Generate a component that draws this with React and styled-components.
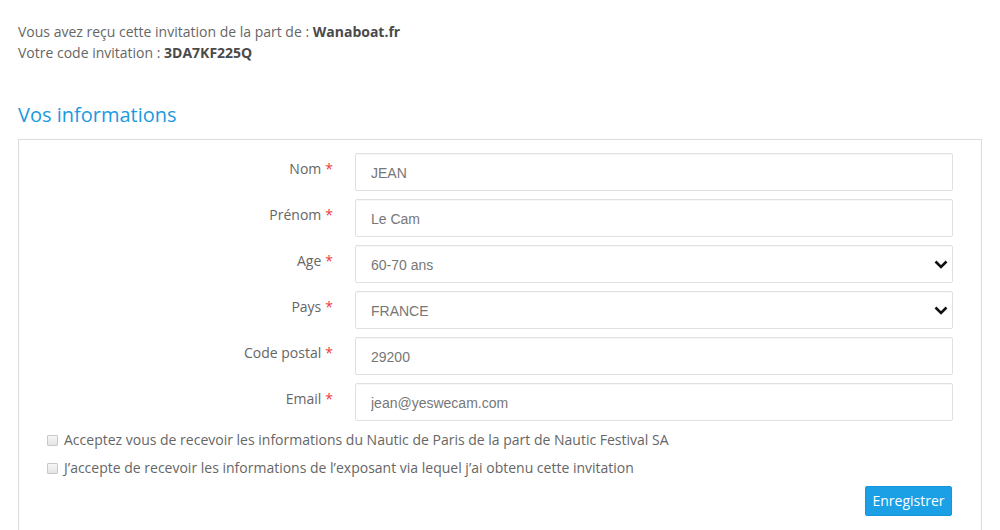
import React from "react";
import styled, { createGlobalStyle } from "styled-components";

const Global = createGlobalStyle`
  html, body { margin: 0; padding: 0; background: #fff; }
  body { font-family: "Open Sans", "Liberation Sans", sans-serif; color: #666; overflow: hidden; }
  * { box-sizing: border-box; }
`;

const Page = styled.div`
  padding: 21px 18px 0 18px;
`;

const Intro = styled.p`
  margin: 0;
  font-size: 14px;
  line-height: 21px;
  color: #666;
  b { font-weight: 700; color: #4a4a4a; }
`;

const Heading = styled.h2`
  margin: 41px 0 13px 0;
  font-size: 20px;
  line-height: 22px;
  font-weight: 400;
  color: #1b9ae1;
`;

const Panel = styled.div`
  border: 1px solid #dcdcdc;
  border-bottom: none;
  padding: 13px 28px 30px 28px;
`;

const Row = styled.div`
  display: flex;
  align-items: flex-start;
  gap: 22px;
  margin-bottom: 8px;
`;

const Label = styled.label`
  width: 286px;
  flex: none;
  text-align: right;
  font-size: 14px;
  line-height: 20px;
  padding-top: 6px;
  color: #666;
`;

const Star = styled.span`
  color: #ee3a3a;
  margin-left: 4px;
`;

const Field = styled.div`
  position: relative;
  flex: 1;
`;

const TextInput = styled.input`
  display: block;
  width: 100%;
  height: 38px;
  border: 1px solid #e0e0e0;
  border-radius: 2px;
  box-shadow: inset 0 1px 1px rgba(0,0,0,0.03);
  padding: 2px 15px 0 15px;
  font-family: "Liberation Sans", Arial, sans-serif;
  font-size: 14px;
  color: #777;
  background: #fff;
  outline: none;
  appearance: none;
`;

const Chevron = styled.svg`
  position: absolute;
  right: 5px;
  top: 15px;
  width: 14px;
  height: 9px;
  pointer-events: none;
`;

const CheckRow = styled.label`
  display: flex;
  align-items: center;
  gap: 6px;
  font-size: 14px;
  line-height: 20px;
  color: #666;
  margin-top: ${(p) => p.$mt}px;
`;

const Box = styled.span`
  width: 11px;
  height: 11px;
  flex: none;
  border: 1px solid #c8c8c8;
  border-radius: 1px;
  background: linear-gradient(#f6f6f6, #e4e4e4);
`;

const Actions = styled.div`
  display: flex;
  justify-content: flex-end;
  margin-top: 8px;
  padding-right: 1px;
`;

const Button = styled.button`
  width: 87px;
  height: 30px;
  padding: 0;
  border: 1px solid #1796dc;
  border-radius: 2px;
  background: #1ba0e6;
  color: #fff;
  font-family: "Open Sans", sans-serif;
  font-size: 14px;
  line-height: 20px;
  cursor: pointer;
`;

const fields = [
  { label: "Nom", value: "JEAN" },
  { label: "Prénom", value: "Le Cam" },
  { label: "Age", value: "60-70 ans", select: true },
  { label: "Pays", value: "FRANCE", select: true },
  { label: "Code postal", value: "29200" },
  { label: "Email", value: "jean@yeswecam.com" },
];

export default function App() {
  return (
    <>
      <Global />
      <Page>
        <Intro>Vous avez reçu cette invitation de la part de : <b>Wanaboat.fr</b></Intro>
        <Intro>Votre code invitation : <b>3DA7KF225Q</b></Intro>
        <Heading>Vos informations</Heading>
        <Panel>
          {fields.map((f) => (
            <Row key={f.label}>
              <Label>
                {f.label}
                <Star>*</Star>
              </Label>
              <Field>
                <TextInput readOnly defaultValue={f.value} />
                {f.select && (
                  <Chevron viewBox="0 0 14 9">
                    <polyline points="1.5,1.5 7,7 12.5,1.5" fill="none" stroke="#111" strokeWidth="2.6" />
                  </Chevron>
                )}
              </Field>
            </Row>
          ))}
          <CheckRow $mt={9}>
            <Box />
            Acceptez vous de recevoir les informations du Nautic de Paris de la part de Nautic Festival SA
          </CheckRow>
          <CheckRow $mt={8}>
            <Box />
            J’accepte de recevoir les informations de l’exposant via lequel j’ai obtenu cette invitation
          </CheckRow>
          <Actions>
            <Button>Enregistrer</Button>
          </Actions>
        </Panel>
      </Page>
    </>
  );
}
